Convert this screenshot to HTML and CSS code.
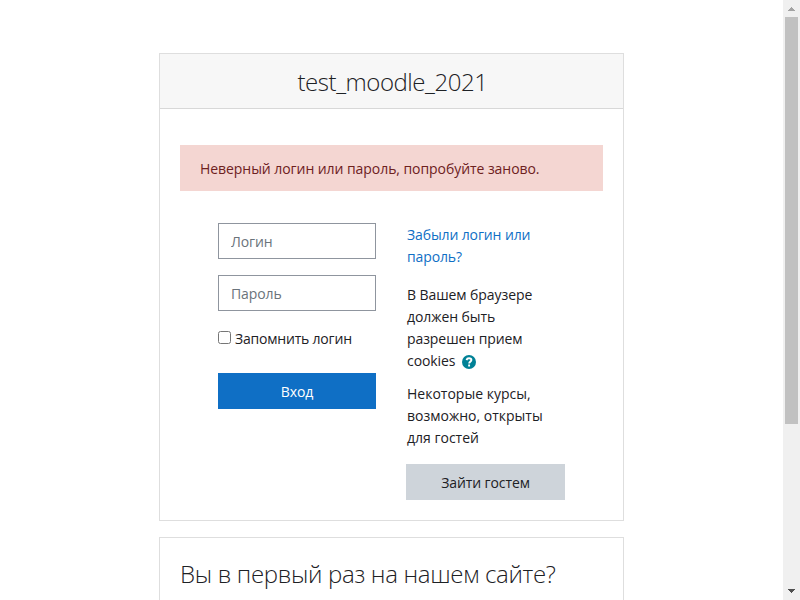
FILE: index.html
```html
<!DOCTYPE html>
<html lang="ru">
<head>
<meta charset="utf-8">
<title>test_moodle_2021</title>
<link rel="stylesheet" href="styles.css">
</head>
<body>
<main class="page">
  <section class="card">
    <h2 class="card-header">test_moodle_2021</h2>
    <div class="card-body">
      <div class="alert">Неверный логин или пароль, попробуйте заново.</div>
      <div class="columns">
        <form class="login">
          <input class="field" type="text" placeholder="Логин">
          <input class="field" type="password" placeholder="Пароль">
          <label class="remember"><input class="check" type="checkbox"><span class="remember-text">Запомнить логин</span></label>
          <button class="btn primary" type="button">Вход</button>
        </form>
        <div class="info">
          <a class="forgot">Забыли логин или<br>пароль?</a>
          <p class="cookies">В Вашем браузере<br>должен быть<br>разрешен прием<br>cookies<svg class="help" viewBox="0 0 14 14"><circle cx="7" cy="7" r="7"/><path d="M4.5 5.1C4.9 3.8 5.8 3.3 7 3.3C8.5 3.3 9.4 4 9.4 5.1C9.4 6.7 7.2 6.6 7.2 8.4M7.1 9.6V11.4"/></svg></p>
          <p class="guests">Некоторые курсы,<br>возможно, открыты<br>для гостей</p>
          <button class="btn secondary" type="button">Зайти гостем</button>
        </div>
      </div>
    </div>
  </section>
  <section class="card signup">
    <h2 class="signup-title">Вы в первый раз на нашем сайте?</h2>
  </section>
</main>
<div class="scrollbar">
  <svg class="arrow" viewBox="0 0 17 17"><path class="up" d="M8 7h1v1h1v1h1v1h1v1H5v-1h1V9h1V8h1z"/></svg>
  <div class="thumb"></div>
  <svg class="arrow" viewBox="0 0 17 17"><path class="down" d="M5 6h7v1h-1v1h-1v1H9v1H8V9H7V8H6V7H5z"/></svg>
</div>
</body>
</html>
```
FILE: styles.css
```css
* { box-sizing: border-box; }

body {
  margin: 0;
  height: 600px;
  display: flex;
  overflow: hidden;
  background: #fff;
  color: #1d2125;
  font: 14px/22px "Open Sans", "Noto Sans", sans-serif;
}

h2, p { margin: 0; }

.page {
  width: 783px;
  height: 600px;
  padding-top: 53px;
  display: flex;
  flex-direction: column;
  align-items: center;
  gap: 16px;
}

.card {
  width: 465px;
  flex-shrink: 0;
  border: 1px solid #dedede;
  background: #fff;
}

.card-header {
  height: 55px;
  padding: 11px 0 0 2px;
  border-bottom: 1px solid #d8d8d8;
  background: #f7f7f7;
  text-align: center;
  font-size: 24px;
  font-weight: 300;
  line-height: 34px;
  letter-spacing: -0.45px;
}

.card-body {
  height: 411px;
  padding: 36px 20px 20px;
}

.alert {
  height: 46px;
  padding: 13px 20px 11px;
  background: #f4d6d2;
  color: #6e211e;
  letter-spacing: -0.06px;
}

.columns {
  display: grid;
  grid-template-columns: 158px 159px;
  column-gap: 30px;
  padding: 32px 0 0 38px;
}

.login { display: flex; flex-direction: column; }

.field {
  width: 158px;
  height: 36px;
  margin: 0 0 16px;
  padding: 6px 12px;
  border: 1px solid #8f959e;
  border-radius: 0;
  background: #fff;
  font: inherit;
  letter-spacing: -0.1px;
}

.field::placeholder { color: #6a737b; opacity: 1; }

.remember { display: flex; height: 46px; }

.remember-text { padding-top: 1px; letter-spacing: -0.2px; }

.check { width: 13px; height: 13px; margin: 4px 4px 0 0; }

.btn {
  height: 36px;
  padding: 1px 0 0;
  border: 0;
  font: inherit;
  letter-spacing: -0.1px;
  text-align: center;
}

.primary { background: #0f6fc5; color: #fff; }

.info { display: flex; flex-direction: column; white-space: nowrap; }

.forgot { color: #0f6fc5; height: 61px; padding: 1px 0 0 1px; letter-spacing: -0.12px; }
.cookies { height: 99px; padding-left: 1px; letter-spacing: -0.08px; }
.guests { height: 81px; padding-left: 1px; }

.secondary { background: #ced4da; color: #1d2125; }

.help { width: 14px; height: 14px; margin-left: 7px; vertical-align: -3px; }
.help circle { fill: #008196; }
.help path { fill: none; stroke: #fff; stroke-width: 1.9; }

.signup { flex: 1 1 0; border-bottom: 0; padding: 19px 20px 0; }

.signup-title {
  font-size: 24px;
  font-weight: 300;
  line-height: 34px;
  letter-spacing: -0.32px;
  white-space: nowrap;
}

.scrollbar {
  width: 17px;
  display: flex;
  flex-direction: column;
  background: #f0f0f0;
}

.arrow { width: 17px; height: 17px; flex-shrink: 0; }
.up { fill: #a3a3a3; }
.down { fill: #505050; }

.thumb {
  width: 13px;
  height: 407px;
  margin: 0 2px 159px;
  background: #c1c1c1;
}
```
